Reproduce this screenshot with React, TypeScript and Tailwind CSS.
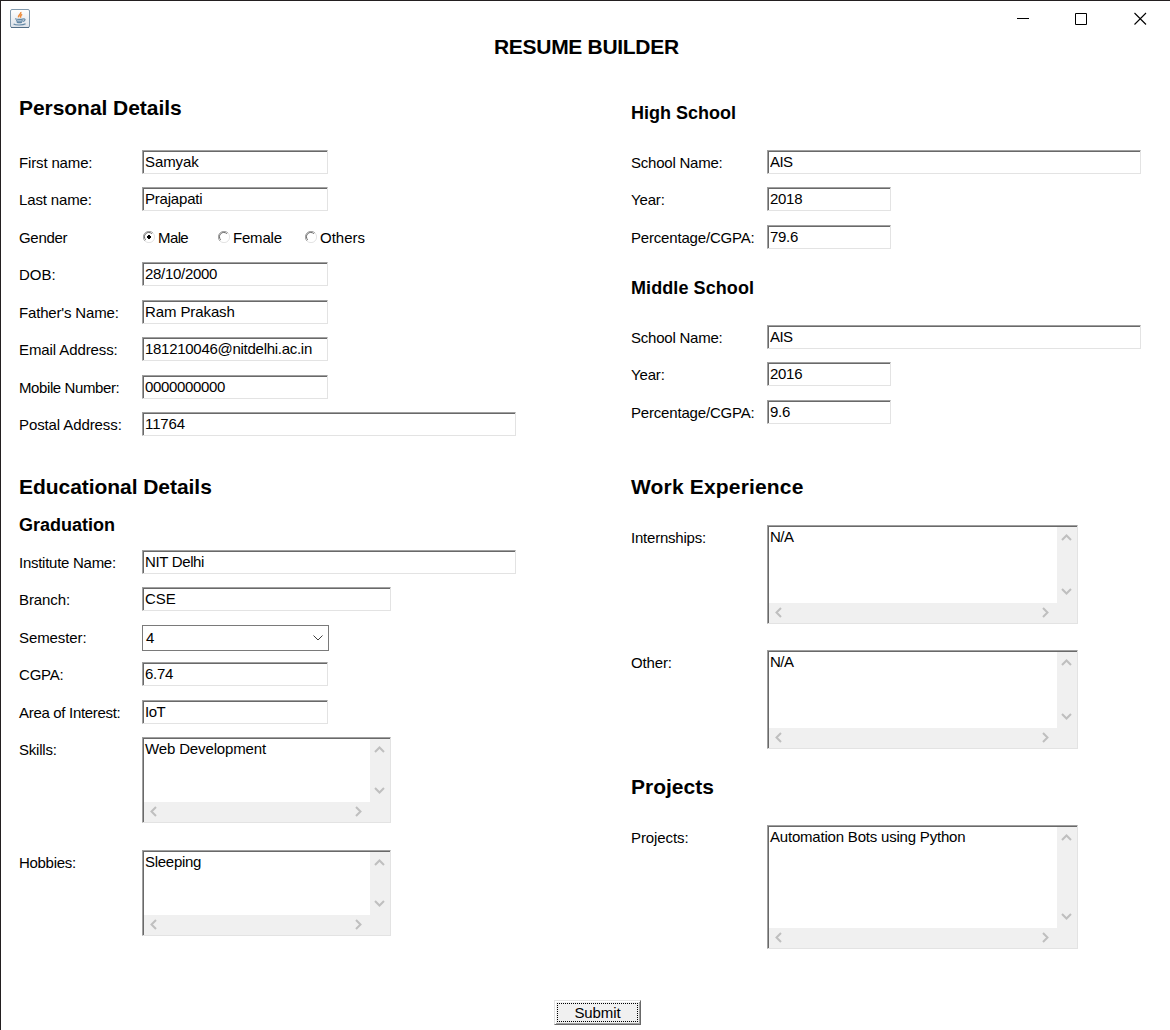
import React, { useState } from "react";

const bevel =
  "border border-t-[#a0a0a0] border-l-[#a0a0a0] border-r-[#e3e3e3] border-b-[#e3e3e3] shadow-[inset_1px_1px_0_#696969] bg-white";

type RowProps = { label: string; className: string; children: React.ReactNode; track?: string; labelWidth?: string };

function Row({ label, className, children, track = "", labelWidth = "w-[123px]" }: RowProps) {
  return (
    <div className={`flex items-start ${className}`}>
      <div className={`${labelWidth} shrink-0 pt-[5px] leading-4 whitespace-nowrap ${track}`}>{label}</div>
      {children}
    </div>
  );
}

function RightRow(props: RowProps) {
  return <Row {...props} labelWidth="w-[136px]" />;
}

function Field({ value, className }: { value: string; className: string }) {
  return <input type="text" defaultValue={value} className={`block h-6 rounded-none px-[2px] pb-[1px] leading-4 outline-none ${bevel} ${className}`} />;
}

function Arrow({ d }: { d: string }) {
  return (
    <svg className="shrink-0" viewBox="0 0 11 11" width="11" height="11" fill="none" stroke="#bfbfbf" strokeWidth="2">
      <path d={d} />
    </svg>
  );
}

function Area({ value, className }: { value: string; className: string }) {
  return (
    <div className={`flex flex-col pt-[1px] pl-[1px] ${bevel} ${className}`}>
      <div className="flex min-h-0 flex-1">
        <textarea defaultValue={value} className="min-w-0 flex-1 resize-none overflow-hidden bg-transparent pl-[1px] pt-[2px] leading-4 outline-none" />
        <div className="flex w-5 flex-col items-start justify-between bg-[#f0f0f0] pt-[5px] pb-[6px] pl-1">
          <Arrow d="M1 8 L5.5 3.5 L10 8" />
          <Arrow d="M1 3 L5.5 7.5 L10 3" />
        </div>
      </div>
      <div className="flex h-5 items-start justify-between bg-[#f0f0f0] pt-1 pl-1 pr-[26px]">
        <Arrow d="M8 1 L3.5 5.5 L8 10" />
        <Arrow d="M3 1 L7.5 5.5 L3 10" />
      </div>
    </div>
  );
}

function Radio({ label, on, pick, className }: { label: string; on: boolean; pick: () => void; className: string }) {
  return (
    <button type="button" onClick={pick} className={`flex shrink-0 items-start pt-[5px] leading-4 ${className}`}>
      <svg className="mt-px mr-[3px] shrink-0" width="12" height="12" viewBox="0 0 12 12" fill="none">
        <path d="M2 10 A5.2 5.2 0 0 1 10 2" stroke="#a0a0a0" />
        <path d="M2.7 8.8 A4.2 4.2 0 0 1 8.8 2.7" stroke="#696969" />
        <path d="M10 2 A5.2 5.2 0 0 1 2 10" stroke="#e3e3e3" />
        {on && <path d="M5 4h2v1h1v2h-1v1h-2v-1h-1v-2h1z" fill="#000" />}
      </svg>
      {label}
    </button>
  );
}

function JavaIcon() {
  return (
    <svg width="20" height="19" viewBox="0 0 20 19" fill="none">
      <defs>
        <linearGradient id="tile" x1="0" y1="0" x2="0" y2="1">
          <stop offset="0" stopColor="#fff" />
          <stop offset="1" stopColor="#dde2e8" />
        </linearGradient>
      </defs>
      <rect x=".5" y=".5" width="19" height="18" rx="1.5" fill="url(#tile)" stroke="#8199ad" />
      <path d="M1 18.5h18" stroke="#526d85" />
      <path d="M10.8 3c.9 2.2-3.4 2.9-2.2 5.4M12.2 5.4c-2.2.8-2 1.9-1.5 3.4" stroke="#ee8c3c" strokeWidth="1.5" />
      <path d="M5 9.8c2 .6 6 .6 8.6 0M6 11.6c2 .7 4.6.7 6.8 0M6.8 13.2c1.5.6 3.6.6 5.2 0M13.6 10c2.2-.5 1.7 2-.6 2.3M3.6 15c2 1.5 9.4 1.3 12-.3" stroke="#6287a5" strokeWidth="1.2" />
    </svg>
  );
}

const h1 = "text-[21px] leading-6 font-bold whitespace-nowrap";
const h2 = "text-[18px] leading-5 font-bold whitespace-nowrap";

export default function App() {
  const [gender, setGender] = useState("Male");
  return (
    <div className="flex h-[1030px] w-[1170px] flex-col overflow-hidden border-t border-l border-[#231f20] bg-white font-['Liberation_Sans',Arial,sans-serif] text-[15px] text-black">
      <header className="flex h-[34px] shrink-0 items-start justify-between pl-[9px] pt-2">
        <JavaIcon />
        <div className="flex h-[19px] items-center pr-[23px]">
          <svg className="mr-[45px]" width="13" height="13" viewBox="0 0 13 13" stroke="#000"><path d="M0 6.5h12" /></svg>
          <svg className="mr-[46px]" width="13" height="13" viewBox="0 0 13 13" fill="none" stroke="#000"><path d="M.5 1.5h11v11H.5z" /></svg>
          <svg width="13" height="13" viewBox="0 0 13 13" fill="none" stroke="#000" strokeWidth="1.1"><path d="M.5 1l11.5 11.5M12 1L.5 12.5" /></svg>
        </div>
      </header>
      <h1 className="h-6 shrink-0 pl-[493px] text-[21px] leading-6 font-bold tracking-[-0.3px] whitespace-nowrap">RESUME BUILDER</h1>
      <main className="flex h-[941px] shrink-0 pl-[18px]">
        <div className="w-[612px] pt-[37px]">
          <h2 className={`h-[54px] tracking-[-0.05px] ${h1}`}>Personal Details</h2>
          <Row label="First name:" track="tracking-[-0.15px]" className="h-[37px]"><Field value="Samyak" className="w-[186px] tracking-[-0.1px]" /></Row>
          <Row label="Last name:" track="tracking-[-0.15px]" className="h-[38px]"><Field value="Prajapati" className="w-[186px] tracking-[-0.2px]" /></Row>
          <Row label="Gender" track="tracking-[-0.3px]" className="h-[37px]">
            <Radio label="Male" on={gender === "Male"} pick={() => setGender("Male")} className="ml-px w-[75px] tracking-[-0.6px]" />
            <Radio label="Female" on={gender === "Female"} pick={() => setGender("Female")} className="w-[87px] tracking-[-0.2px]" />
            <Radio label="Others" on={gender === "Others"} pick={() => setGender("Others")} className="" />
          </Row>
          <Row label="DOB:" className="h-[38px]"><Field value="28/10/2000" className="w-[186px] tracking-[-0.3px]" /></Row>
          <Row label="Father's Name:" track="tracking-[-0.17px]" className="h-[37px]"><Field value="Ram Prakash" className="w-[186px] tracking-[-0.1px]" /></Row>
          <Row label="Email Address:" track="tracking-[-0.1px]" className="h-[38px]"><Field value="181210046@nitdelhi.ac.in" className="w-[186px] tracking-[-0.28px]" /></Row>
          <Row label="Mobile Number:" track="tracking-[-0.4px]" className="h-[37px]"><Field value="0000000000" className="w-[186px] tracking-[-0.33px]" /></Row>
          <Row label="Postal Address:" track="tracking-[-0.1px]" className="h-[63px]"><Field value="11764" className="w-[374px] tracking-[-0.1px]" /></Row>
          <h2 className={`h-[40px] tracking-[-0.05px] ${h1}`}>Educational Details</h2>
          <h3 className={`h-[35px] ${h2}`}>Graduation</h3>
          <Row label="Institute Name:" track="tracking-[-0.27px]" className="h-[37px]"><Field value="NIT Delhi" className="w-[374px] tracking-[-0.35px]" /></Row>
          <Row label="Branch:" track="tracking-[-0.1px]" className="h-[38px]"><Field value="CSE" className="w-[249px]" /></Row>
          <Row label="Semester:" track="tracking-[-0.1px]" className="h-[37px]">
            <div className="flex h-[26px] w-[187px] items-center justify-between border border-[#7a7a7a] pr-[5px] pl-[3px] leading-4">
              <span>4</span>
              <svg width="10" height="6" viewBox="0 0 10 6" fill="none" stroke="#404040"><path d="M.5.5 L5 5 L9.5.5" /></svg>
            </div>
          </Row>
          <Row label="CGPA:" track="tracking-[-0.2px]" className="h-[38px]"><Field value="6.74" className="w-[186px] tracking-[-0.3px]" /></Row>
          <Row label="Area of Interest:" track="tracking-[-0.31px]" className="h-[37px]"><Field value="IoT" className="w-[186px] tracking-[-0.5px]" /></Row>
          <Row label="Skills:" track="tracking-[-0.2px]" className="h-[113px]"><Area value="Web Development" className="h-[86px] w-[249px] tracking-[-0.14px]" /></Row>
          <Row label="Hobbies:" track="tracking-[-0.3px]" className=""><Area value="Sleeping" className="h-[86px] w-[249px] tracking-[-0.28px]" /></Row>
        </div>
        <div className="w-[539px] pt-[44px]">
          <h3 className={`h-[47px] ${h2}`}>High School</h3>
          <RightRow label="School Name:" track="tracking-[-0.23px]" className="h-[37px]"><Field value="AIS" className="w-[374px] tracking-[-0.6px]" /></RightRow>
          <RightRow label="Year:" track="tracking-[-0.15px]" className="h-[38px]"><Field value="2018" className="w-[124px] tracking-[-0.3px]" /></RightRow>
          <RightRow label="Percentage/CGPA:" track="tracking-[-0.18px]" className="h-[53px]"><Field value="79.6" className="w-[124px] tracking-[-0.3px]" /></RightRow>
          <h3 className={`h-[47px] tracking-[0.08px] ${h2}`}>Middle School</h3>
          <RightRow label="School Name:" track="tracking-[-0.23px]" className="h-[37px]"><Field value="AIS" className="w-[374px] tracking-[-0.6px]" /></RightRow>
          <RightRow label="Year:" track="tracking-[-0.15px]" className="h-[38px]"><Field value="2016" className="w-[124px] tracking-[-0.3px]" /></RightRow>
          <RightRow label="Percentage/CGPA:" track="tracking-[-0.18px]" className="h-[75px]"><Field value="9.6" className="w-[124px] tracking-[-0.3px]" /></RightRow>
          <h2 className={`h-[50px] tracking-[0.17px] ${h1}`}>Work Experience</h2>
          <RightRow label="Internships:" track="tracking-[-0.22px]" className="h-[125px]"><Area value="N/A" className="h-[99px] w-[311px] tracking-[-0.5px]" /></RightRow>
          <RightRow label="Other:" track="tracking-[-0.15px]" className="h-[125px]"><Area value="N/A" className="h-[99px] w-[311px] tracking-[-0.5px]" /></RightRow>
          <h2 className={`h-[50px] ${h1}`}>Projects</h2>
          <RightRow label="Projects:" track="tracking-[-0.1px]" className=""><Area value="Automation Bots using Python" className="h-[124px] w-[311px] tracking-[-0.2px]" /></RightRow>
        </div>
      </main>
      <div className="flex shrink-0 pl-[553px]">
        <button type="button" className="h-[25px] w-[87px] border border-t-[#e3e3e3] border-l-[#e3e3e3] border-r-[#696969] border-b-[#696969] bg-[#f0f0f0] p-[2px] leading-4 shadow-[inset_1px_1px_0_#fff,inset_-1px_-1px_0_#a0a0a0]">
          <span className="flex h-[19px] w-[81px] items-center justify-center border border-dotted border-black tracking-[-0.1px]">Submit</span>
        </button>
      </div>
    </div>
  );
}
